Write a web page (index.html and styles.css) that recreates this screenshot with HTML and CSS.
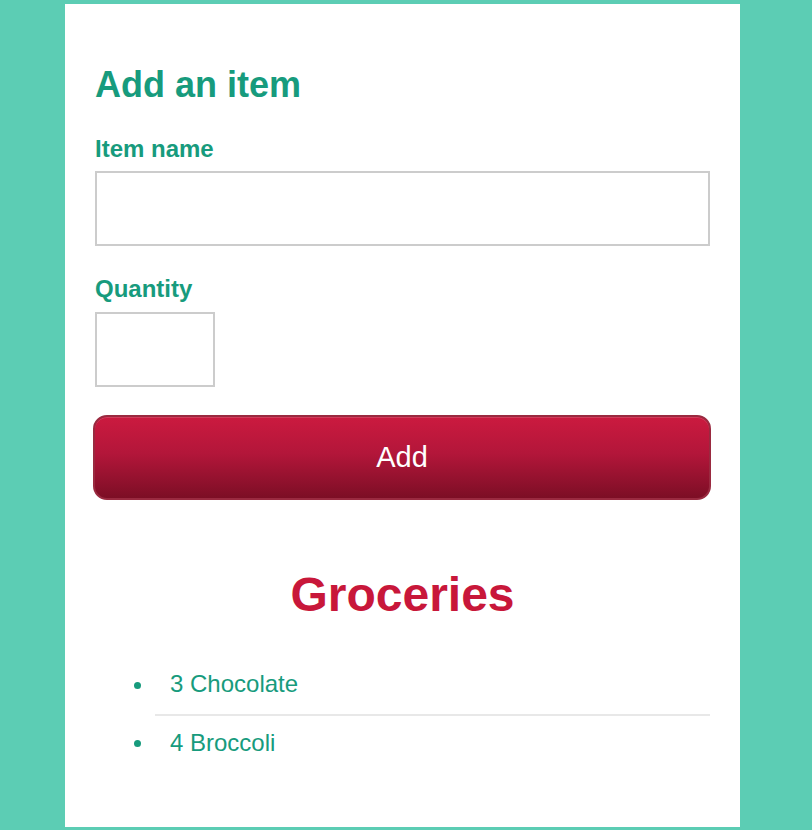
FILE: index.html
```html
<!DOCTYPE html>
<html lang="en">
<head>
<meta charset="utf-8">
<title>Groceries</title>
<link rel="stylesheet" href="styles.css">
</head>
<body>
<main class="card">
  <form class="add-form">
    <h2 class="form-title">Add an item</h2>
    <label class="field-label" for="name">Item name</label>
    <input class="field field-name" id="name" type="text">
    <label class="field-label field-label-qty" for="qty">Quantity</label>
    <input class="field field-qty" id="qty" type="text">
    <button class="add-btn" type="button">Add</button>
  </form>
  <section class="list-section">
    <h1 class="list-title">Groceries</h1>
    <ul class="items">
      <li class="item">3 Chocolate</li>
      <li class="item">4 Broccoli</li>
    </ul>
  </section>
</main>
</body>
</html>
```

FILE: styles.css
```css
* { box-sizing: border-box; }

html, body {
  margin: 0;
  padding: 0;
}

body {
  background: #5ccdb4;
  font-family: "Liberation Sans", Arial, sans-serif;
  padding: 4px 0 0 65px;
  height: 830px;
  overflow: hidden;
}

.card {
  width: 675px;
  height: 823px;
  background: #ffffff;
  padding: 63px 30px 0 30px;
}

.add-form {
  display: flex;
  flex-direction: column;
  align-items: flex-start;
}

.form-title {
  margin: 0;
  font-size: 36px;
  line-height: 36px;
  font-weight: bold;
  color: #179b7d;
}

.field-label {
  display: block;
  margin-top: 34px;
  font-size: 24px;
  line-height: 24px;
  font-weight: bold;
  color: #179b7d;
}

.field-label-qty {
  margin-top: 31px;
}

.field {
  margin-top: 10px;
  height: 75px;
  border: 2px solid #cccccc;
  background: #fff;
  font-family: inherit;
  font-size: 24px;
  padding: 0 10px;
  outline: none;
}

.field-name {
  width: 615px;
}

.field-qty {
  width: 120px;
  margin-top: 11px;
}

.add-btn {
  margin: 28px 0 0 -2px;
  width: 618px;
  height: 85px;
  border: 2px solid #9a2a40;
  border-radius: 14px;
  background: linear-gradient(to bottom, #cb1a3f 0%, #b3163a 45%, #7c0e25 100%);
  box-shadow: inset 0 1px 0 rgba(255, 255, 255, 0.15);
  color: #ffffff;
  font-family: inherit;
  font-size: 29px;
  line-height: 29px;
  cursor: pointer;
}

.list-section {
  display: flex;
  flex-direction: column;
}

.list-title {
  margin: 71px 0 0 0;
  text-align: center;
  font-size: 48px;
  line-height: 48px;
  font-weight: bold;
  color: #c8173a;
}

.items {
  list-style: none;
  margin: 39px 0 0 0;
  padding: 0 0 0 60px;
}

.item {
  position: relative;
  padding: 14px 0 18px 15px;
  font-size: 24px;
  line-height: 24px;
  color: #179b7d;
}

.item::before {
  content: "";
  position: absolute;
  left: -21px;
  top: 24px;
  width: 7px;
  height: 7px;
  border-radius: 50%;
  background: #179b7d;
}

.item + .item {
  border-top: 2px solid #e8e8e8;
  padding-top: 15px;
}
```
